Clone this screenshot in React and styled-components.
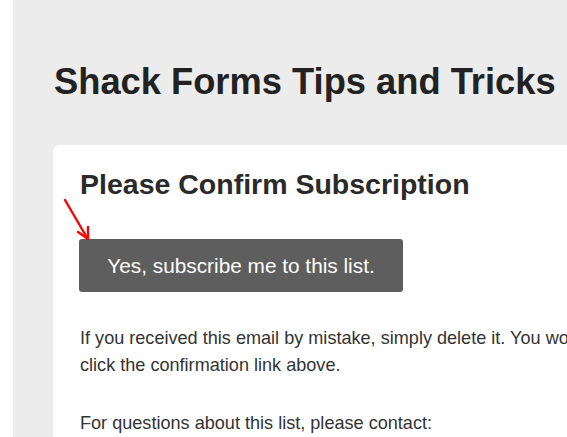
import styled, { createGlobalStyle } from "styled-components";

const GlobalStyle = createGlobalStyle`
body{
    margin: 0;
    background: #fff;
    overflow: hidden;
    font-family: "Liberation Sans", Arial, sans-serif;
}
`;

const App = () => {
    return (
        <Page>
            <GlobalStyle />
            <Wrapper>
                <Title>Shack Forms Tips and Tricks</Title>
                <Card>
                    <Heading>Please Confirm Subscription</Heading>
                    <ButtonRow>
                        <Arrow width="30" height="44" viewBox="0 0 30 44">
                            <line x1="2" y1="2" x2="23" y2="38" stroke="#ff0000" strokeWidth="2.4" strokeLinecap="round" />
                            <path d="M15 34 L25 41 L25 29" fill="none" stroke="#ff0000" strokeWidth="2.4" strokeLinecap="round" strokeLinejoin="round" />
                        </Arrow>
                        <Subscribe>Yes, subscribe me to this list.</Subscribe>
                    </ButtonRow>
                    <Text>
                        If you received this email by mistake, simply delete it. You won't be subscribed if you don't click the confirmation link above.
                    </Text>
                    <Text spaced>For questions about this list, please contact:</Text>
                </Card>
            </Wrapper>
        </Page>
    );
};
export default App;

const Page = styled.div`
padding-left: 13px;
width: 1000px;
`;

const Wrapper = styled.div`
background: #ececec;
padding: 61px 0 40px 40px;
min-height: 437px;
box-sizing: border-box;
`;

const Title = styled.h1`
margin: 0 0 42px 1px;
font-size: 36.3px;
font-weight: 700;
color: #222;
line-height: normal;
`;

const Card = styled.div`
background: #fff;
border-radius: 7px;
padding: 23px 26px 30px 26px;
width: 745px;
`;

const Heading = styled.h2`
margin: 0 0 38px 1px;
font-size: 28.5px;
font-weight: 700;
color: #2a2a2a;
line-height: normal;
`;

const ButtonRow = styled.div`
position: relative;
`;

const Arrow = styled.svg`
position: absolute;
left: -16px;
top: -41px;
`;

const Subscribe = styled.button`
display: block;
background: #5e5e5e;
color: #fff;
border: 0;
border-radius: 3px;
width: 324px;
height: 53px;
padding: 0;
font-family: "Liberation Sans", Arial, sans-serif;
font-size: 20.8px;
cursor: pointer;
`;

const Text = styled.p`
margin: ${props => (props.spaced ? "31px" : "33px")} 0 0 1px;
font-size: 18.1px;
line-height: 27px;
color: #333;
`;
